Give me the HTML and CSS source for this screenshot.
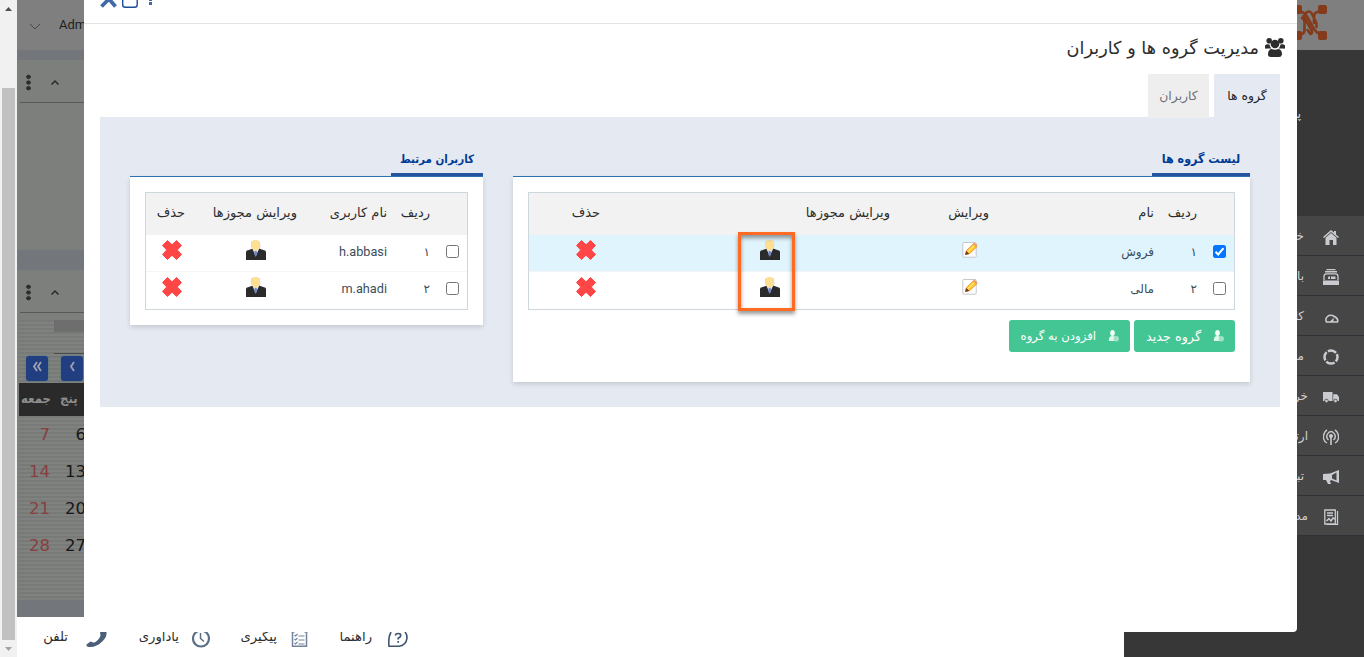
FILE: index.html
```html
<!DOCTYPE html>
<html lang="fa">
<head>
<meta charset="utf-8">
<title>مدیریت گروه ها و کاربران</title>
<link rel="stylesheet" href="styles.css">
</head>
<body>
<svg width="0" height="0" class="defs">
  <symbol id="cross" viewBox="0 0 20 20"><path d="M5.500 .5 10 4.800 14.500 .5 19.500 5.500 15.300 10 19.500 14.500 14.500 19.500 10 15.200 5.500 19.500 .5 14.500 4.700 10 .5 5.500Z" fill="#ff4646" stroke="#ff4646" stroke-linejoin="round"/></symbol>
  <symbol id="man" viewBox="0 0 20 20"><path d="M0 20v-8q0-1.500 2-1.800L7 8.500h6l5 1.700q2 .3 2 1.800v8Z" fill="#2b2b2b"/><path d="M6.500 9h6.500l-3.300 7Z" fill="#f4f5fa"/><path d="m8.800 10.500h1.700l.8 3.500-1.600 3-1.600-3Z" fill="#7085c4"/><path d="M5 1.500Q9.500-1.500 14 1.500l.5 5.500Q12 10.500 9.700 10.500T5 7Z" fill="#d7d9d7"/><path d="M5.600 1.500Q9.700-.8 13.700 1.500v5q-1 4-4 4t-4.100-4Z" fill="#ffe091"/></symbol>
  <symbol id="edit" viewBox="0 0 16 17"><rect x=".8" y="1.500" width="13.400" height="14.700" rx="1" fill="#fff" stroke="#c4c7cc"/><path d="m3.500 13.600.8-3.800L11.500 2.800l3.300 3-7.500 7Z" fill="#ffcf2d" stroke="#e8842d" stroke-width=".9"/><path d="m11 3.300 1.500-1.500 3 2.500-1.300 2Z" fill="#f09a65"/><path d="m3.200 14 1-4 3 2.800Z" fill="#713719"/><path d="m6 10.600 6-6" stroke="#fff3a0"/></symbol>
  <symbol id="usr" viewBox="0 0 12 14"><ellipse cx="4.500" cy="4" rx="2.300" ry="2.900" fill="#f4fffa"/><path d="M.8 12Q.5 7 4.500 7T8 12Z" fill="#e0f8ee"/><circle cx="8.200" cy="9.800" r="2.700" fill="#a4e2c8"/></symbol>
</svg>
<div class="desk">
  <div class="scroll">
    <svg class="arrow" viewBox="0 0 17 17"><path d="M5 11h7L8.500 7Z" fill="#505050"/></svg>
    <div class="thumb"></div>
    <svg class="arrow" viewBox="0 0 17 17"><path d="M5 7h7l-3.500 4Z" fill="#a3a3a3"/></svg>
  </div>
  <div class="work">
    <div class="top"><svg width="12" height="8" viewBox="0 0 12 8"><path d="m1 1 5 5 5-5" fill="none" stroke="#44484c"/></svg><span>Admin</span></div>
    <div class="card one"><div class="cardhead"><i class="dots"></i><svg width="10" height="7" viewBox="0 0 10 7"><path d="m1.500 5.500 3.500-3.500 3.500 3.500" fill="none" stroke="#292929" stroke-width="1.500"/></svg></div></div>
    <div class="card two"><div class="cardhead"><i class="dots"></i><svg width="10" height="7" viewBox="0 0 10 7"><path d="m1.500 5.500 3.500-3.500 3.500 3.500" fill="none" stroke="#292929" stroke-width="1.500"/></svg></div>
      <div class="cal">
        <div class="month"></div>
        <div class="nav"><b><svg width="10" height="11" viewBox="0 0 10 11"><path d="M5 1 2 5.500 5 10M9 1 6 5.500 9 10" fill="none" stroke="#9fa3ad" stroke-width="1.800"/></svg></b><b><svg width="8" height="11" viewBox="0 0 8 11"><path d="m6 1-3 4.500 3 4.500" fill="none" stroke="#9fa3ad" stroke-width="1.800"/></svg></b></div>
        <div class="days"><span>جمعه</span><span>پنج</span></div>
        <div class="nums"><i>7</i><span>6</span><i>14</i><span>13</span><i>21</i><span>20</span><i>28</i><span>27</span></div>
      </div>
    </div>
    <div class="foot">
      <span class="w1">تلفن</span>
      <svg width="22" height="16" viewBox="0 0 22 16"><path d="M14 0h6.500q.8 4.500-4 9.300Q10.500 15.500 3 15 0 14.500.5 12.500L4.500 9.500l3.500 1.300q4.800-2.300 6.500-7Z" fill="#4b5f79"/></svg>
      <span class="w2">یاداوری</span>
      <svg width="20" height="16" viewBox="0 0 20 16"><circle cx="9" cy="6.500" r="8" fill="none" stroke="#5b6e87" stroke-width="2.200"/><path d="M8.500 1v5.500L12 9.500" fill="none" stroke="#5b6e87" stroke-width="1.500"/></svg>
      <span class="w3">پیگیری</span>
      <svg width="18" height="16" viewBox="0 0 18 16"><path d="M1.500 0v14.200h14V0M.5 0h3m10 0h3" fill="none" stroke="#72839a" stroke-width="1.500"/><path d="m3.500 3 1 1 2-2m1 2h6M3.500 7l1 1 2-2m1 2h6M3.500 11l1 1 2-2m1 2h6" fill="none" stroke="#72839a" stroke-width="1.200"/></svg>
      <span class="w4">راهنما</span>
      <svg width="20" height="16" viewBox="0 0 20 16"><path d="M3 0Q0 5 1 14.200h10q7-.5 8-8Q19 2 17 0" fill="none" stroke="#3f546f" stroke-width="1.600"/><path d="M7.500 3.500q0-2 2.700-2t2.500 2q0 1.500-2.500 2.700v1.300m0 1.500v1.800" fill="none" stroke="#3f546f" stroke-width="1.700"/></svg>
    </div>
  </div>
  <div class="side">
    <div class="brand"><svg width="34" height="36" viewBox="0 0 34 36"><g fill="none" stroke="#843b1b" stroke-width="2.600" stroke-linecap="round"><path d="M4 5l6 2.500q2.500 1 4 4l7 12.500q2 3 5 4.500l4 2M4 31l5-2q2.500-1 2.500-4V17q0-3-2.500-4M30 5l-6 2q-3 1-3 5v6M13 8q3-3 5.500 0l3.500 7q2 3 1.500 7M10.500 11l8 14q1.500 3.500-1 4l-3-4"/></g><g fill="#843b1b"><rect width="9" height="9" rx="2"/><rect x="25" width="9" height="9" rx="2"/><rect y="26" width="9" height="9" rx="2"/><rect x="25" y="26" width="9" height="9" rx="2"/></g></svg></div>
    <div class="who">پنل</div>
    <div class="menu" dir="rtl">
      <div><svg viewBox="0 0 16 16"><path d="m0 8 8-7 3 2.600V2h2v3.400L16 8l-1 1-7-6-7 6ZM2.500 8.800 8 4l5.500 4.800V16H10v-5H6.500v5h-4Z"/></svg><span class="a">خانه</span></div>
      <div><svg viewBox="0 0 16 16"><path d="M3.500 0h9v1.200h-9ZM2 2h12v1.500H2Z"/><path d="M1 11V7.500Q1 4.800 3.500 4.800h9Q15 4.800 15 7.500V11" fill="none" stroke="#c9cbd0" stroke-width="1.300"/><path d="M0 11.500h16V16H0ZM5 8l2-1v3H5Zm3-.5h4.500v2.500H8Z"/></svg><span class="b">بازاریابی</span></div>
      <div><svg viewBox="0 0 16 16"><path d="M3.500 13Q1.800 10 4.500 7.500T11.500 7.500t3 5.500Z" fill="none" stroke="#c9cbd0" stroke-width="1.600"/><path d="m7 12.500 4-4-.8 4.500H7Z"/></svg><span class="c">کارتابل</span></div>
      <div><svg viewBox="0 0 16 16"><circle cx="8" cy="8" r="6.500" fill="none" stroke="#c9cbd0" stroke-width="2.500" stroke-dasharray="8.800 1.400" stroke-dashoffset="4"/></svg><span class="d">مشتریان</span></div>
      <div><svg viewBox="0 0 16 16"><path d="M0 3h9.500v9H0Zm10.200 2.200H14L16 8v4h-5.800Z"/><circle cx="3.500" cy="12" r="1.800" stroke="#464646" stroke-width=".8"/><circle cx="12.500" cy="12" r="1.800" stroke="#464646" stroke-width=".8"/></svg><span class="e">خرید</span></div>
      <div><svg viewBox="0 0 16 16"><path d="M4 14Q-1 11 1 5 2 2 4 1m8 13q5-3 3-9-1-3-3-4M5.500 11Q2.500 8.500 4.500 5q1.500-2.500 3.500-2.500T11.500 5q2 3.500-1 6" fill="none" stroke="#c9cbd0" stroke-width="1.400"/><circle cx="8" cy="7" r="2"/><path d="M7.200 8h1.600v8H7.200Z"/></svg><span class="f">ارتباطات</span></div>
      <div><svg viewBox="0 0 16 16"><path d="m0 5 7-.5L16 1v13l-8-3-1 1 1 3H5L3 11H0Zm9 1v3.500l4.500 2v-8Z" fill-rule="evenodd"/></svg><span class="g">تبلیغات</span></div>
      <div><svg viewBox="0 0 16 16"><path d="M1.800 1h10.500v14H1.800ZM14.500 2v13.500H4M4 4h6M4 6.500h6" fill="none" stroke="#c9cbd0" stroke-width="1.300"/><path d="m3.500 12 2.500-2.500 2 2.500L10 9l2 1" fill="none" stroke="#c9cbd0" stroke-width="1.500"/></svg><span class="h">مدیریت</span></div>
    </div>
  </div>
</div>

<div class="modal" dir="rtl">
  <div class="bar" dir="ltr"><svg width="56" height="10" viewBox="0 0 56 10"><path d="m1.500 6.500 7.500-7.500 6.500 7.500" fill="none" stroke="#4169a9" stroke-width="3.800"/><rect x="22.700" y="-8" width="14.500" height="15.200" rx="2.500" fill="none" stroke="#1d4d98" stroke-width="1.400"/><path d="M49 0h3v1h-3Zm0 2h3v3h-3Z" fill="#4169a9"/></svg></div>
  <div class="title"><svg width="20" height="20" viewBox="0 0 20 20"><g fill="#2d2d2d"><circle cx="4.200" cy="2.800" r="2.800"/><circle cx="15.800" cy="2.800" r="2.800"/><circle cx="10" cy="6" r="4.300"/><path d="M0 10V7.500q1.500-2 4.500-1 .5 3 2 4H2Q0 11 0 10Zm20 0V7.500q-1.500-2-4.500-1-.5 3-2 4H18q2 .5 2-.5ZM3 16.500q0-5 3.500-5.500 3.500 1.500 7 0 3.500.5 3.500 5.500-.5 2.500-3 2.500H6q-3 0-3-2.500Z"/></g></svg><h1>مدیریت گروه ها و کاربران</h1></div>
  <div class="tabs"><div class="tab on">گروه ها</div><div class="tab off">کاربران</div></div>
  <div class="panel">
    <section class="groups">
      <div class="sechead"><h2>لیست گروه ها</h2></div>
      <div class="box">
        <div class="table">
          <div class="row head"><span></span><span>ردیف</span><span>نام</span><span>ویرایش</span><span>ویرایش مجوزها</span><span>حذف</span></div>
          <div class="row sel"><span class="ck"><i class="check on"><svg width="13" height="13" viewBox="0 0 13 13"><path d="m2.500 6.800 2.700 2.700 5.300-6.300" fill="none" stroke="#fff" stroke-width="2"/></svg></i></span><span>۱</span><span>فروش</span><span class="ed"><svg width="16" height="17"><use href="#edit"/></svg></span><span class="pm"><svg width="20" height="20"><use href="#man"/></svg></span><span class="dl"><svg width="20" height="20"><use href="#cross"/></svg></span></div>
          <div class="row"><span class="ck"><i class="check"></i></span><span>۲</span><span>مالی</span><span class="ed"><svg width="16" height="17"><use href="#edit"/></svg></span><span class="pm"><svg width="20" height="20"><use href="#man"/></svg></span><span class="dl"><svg width="20" height="20"><use href="#cross"/></svg></span></div>
        </div>
        <div class="buttons"><div class="btn new"><svg width="12" height="14"><use href="#usr"/></svg><span>گروه جدید</span></div><div class="btn add"><svg width="12" height="14"><use href="#usr"/></svg><span>افزودن به گروه</span></div></div>
      </div>
    </section>
    <section class="users">
      <div class="sechead"><h2>کاربران مرتبط</h2></div>
      <div class="box">
        <div class="table">
          <div class="row head"><span></span><span>ردیف</span><span>نام کاربری</span><span>ویرایش مجوزها</span><span>حذف</span></div>
          <div class="row"><span class="ck"><i class="check"></i></span><span>۱</span><span class="lat">h.abbasi</span><span class="pm"><svg width="20" height="20"><use href="#man"/></svg></span><span class="dl"><svg width="20" height="20"><use href="#cross"/></svg></span></div>
          <div class="row"><span class="ck"><i class="check"></i></span><span>۲</span><span class="lat">m.ahadi</span><span class="pm"><svg width="20" height="20"><use href="#man"/></svg></span><span class="dl"><svg width="20" height="20"><use href="#cross"/></svg></span></div>
        </div>
      </div>
    </section>
  </div>
</div>
<div class="marker"></div>
</body>
</html>
```
FILE: styles.css
```css
* { box-sizing: border-box; }
body { margin: 0; width: 1364px; height: 657px; overflow: hidden; position: relative; background: #fff; font: 12px "DejaVu Sans", sans-serif; color: #2d2d2d; }
svg { display: block; flex: none; }
.defs { position: absolute; }
h1, h2 { margin: 0; }
i { font-style: normal; }
.desk { display: flex; height: 657px; }

.scroll { width: 17px; background: #f1f1f1; display: flex; flex-direction: column; }
.arrow { width: 17px; height: 17px; }
.thumb { margin: 71px 2px 0; height: 552px; background: #c1c1c1; }

.work { width: 1107px; background: #73777c; display: flex; flex-direction: column; }
.top { height: 50px; background: #7f7f7f; display: flex; align-items: center; gap: 18px; padding-left: 12px; font: 13px Roboto, sans-serif; color: #1e1e1e; }
.top svg { margin-top: 3px; }
.top span { margin-top: -2px; }
.card { background: #7d7f7d; }
.card.one { margin-top: 10px; height: 190px; }
.card.two { margin-top: 20px; height: 330px; }
.cardhead { height: 43px; margin-left: 3px; border-bottom: 1px solid #575959; display: flex; align-items: center; padding: 2px 0 0 6px; }
.dots { width: 5px; height: 17px; margin-right: 19px; background: radial-gradient(circle at center, #2d2d2d 2px, transparent 2.500px) 0 0 / 5px 5.700px; }
.cal { margin: 7px 0 0 2px; height: 279px; background: repeating-linear-gradient(#787a78 0 2px, #808280 2px 4px); }
.month { height: 34px; margin-left: 35px; border-bottom: 1px solid #4c4c4c; background: linear-gradient(#6e6e6e 0 12px, transparent 12px); }
.nav { display: flex; gap: 13px; padding: 2px 0 0 7px; height: 29px; }
.nav b { width: 22px; height: 25px; border-radius: 3px; background: #213e80; display: flex; justify-content: center; padding-top: 5px; box-shadow: 0 0 2px #377b8c; }
.days { height: 33px; background: #2a2a2a; display: flex; color: #8d8d8d; font-weight: bold; font-family: "DejaVu Sans Condensed", sans-serif; font-size: 13px; line-height: 32px; }
.days span:first-child { width: 41px; padding-left: 2px; }
.nums { display: grid; grid-template-columns: 31px 36px; grid-auto-rows: 37px; text-align: right; font: 16.500px "DejaVu Sans", sans-serif; line-height: 37px; color: #171717; }
.nums i { color: #873f3f; }
.foot { margin-top: auto; height: 40px; background: #fff; display: flex; align-items: flex-start; padding: 15px 0 0 25px; }
.foot span { line-height: 14px; margin-top: -2px; display: flex; justify-content: flex-end; direction: ltr; white-space: nowrap; font-size: 13.200px; }
.foot .w1 { width: 26px; margin-right: 18px; }
.foot .w2 { width: 44px; margin-right: 13px; margin-left: 27px; }
.foot .w3 { width: 40px; margin-right: 14px; margin-left: 25px; }
.foot .w4 { width: 35px; margin-right: 16px; margin-left: 28px; }

.side { width: 240px; background: #373737; color: #d2d2d2; }
.brand { height: 50px; background: #7f7f7f; display: flex; padding: 5px 0 0 169px; }
.who { height: 166px; padding: 56px 63px 0 0; text-align: left; direction: rtl; text-align: right; font-size: 13px; }
.menu div { height: 40px; background: #464646; border-bottom: 1px solid #303036; display: flex; align-items: center; padding-right: 25px; }
.menu svg { width: 16px; height: 16px; margin-top: 2px; fill: #c9cbd0; }
.menu span { padding-right: 19px; font-size: 12px; line-height: 16px; }
.menu .e, .menu .h, .menu .f { padding-right: 15px; }

.modal { position: absolute; left: 84px; top: 0; width: 1213px; height: 632px; background: #fff; border-bottom-right-radius: 4px; }
.bar { height: 24px; border-bottom: 1px solid #e3e3e3; padding-left: 16px; }
.title { display: flex; height: 50px; padding: 14px 12px 0 0; gap: 6px; }
.title h1 { font: 17.700px "DejaVu Sans", sans-serif; line-height: 20px; white-space: nowrap; }
.tabs { display: flex; height: 43px; gap: 5px; padding-right: 17px; }
.tab { line-height: 43px; text-align: center; white-space: nowrap; font-size: 12.400px; }
.tab.on { width: 66px; background: #e5eaf2; color: #222; }
.tab.off { width: 61px; height: 44px; background: #eee; color: #717171; z-index: 1; }
.panel { margin: 0 17px 0 16px; height: 290px; background: #e5eaf2; padding: 30px 30px 0; display: flex; justify-content: space-between; align-items: flex-start; }
.groups { width: 737px; }
.users { width: 353px; }
.sechead { height: 30px; border-bottom: 1px solid #2e75b6; }
.sechead h2 { width: 98px; height: 29px; border-bottom: 3px solid #25569f; text-align: center; font-family: "DejaVu Sans Condensed", sans-serif; font-size: 12.400px; line-height: 24px; color: #003b94; white-space: nowrap; }
.users .sechead h2 { width: 92px; font-size: 11.500px; }
.box { background: #fff; padding: 15px; box-shadow: 0 2px 5px rgba(0,0,0,.15); }
.groups .box { height: 205px; }
.users .box { height: 148px; }
.table { height: 118px; border: 1px solid #ced7db; }
.row { display: grid; height: 37px; border-bottom: 1px solid #f3f5f6; color: #3b4d59; white-space: nowrap; line-height: 34px; }
.row:last-child { border-bottom: 0; }
.groups .row { grid-template-columns: 37px 43px 165px 99px 290px 71px; }
.users .row { grid-template-columns: 37px 43px 90px 112px 39px; }
.row.head { height: 42px; background: #f2f2f2; border: 0; color: #2d2d2d; line-height: 40px; font-size: 13px; }
.row.sel { background: #e0f4fd; }
.lat { direction: ltr; text-align: right; font: 12.700px Roboto, sans-serif; line-height: 34px; }
.ck { padding: 10px 8px 0 0; }
.check { display: block; width: 13px; height: 13px; border: 1px solid #767676; border-radius: 2.500px; background: #fff; }
.check.on { border: 0; background: #0075ff; }
.ed { padding: 6px 11px 0 0; }
.pm { padding: 5px 110px 0 0; }
.dl { padding: 5px 4px 0 0; }
.users .pm { padding-right: 31px; }
.users .dl { padding-right: 3px; }
.buttons { display: flex; gap: 4px; margin-top: 10px; }
.btn { height: 32px; border-radius: 3px; background: #44c694; color: #fff; display: flex; align-items: center; padding-right: 10px; gap: 12px; white-space: nowrap; }
.new { width: 101px; font-size: 12.800px; }
.add { width: 121px; font-size: 11.700px; }

.marker { position: absolute; left: 738px; top: 232px; width: 57px; height: 79px; border: 3px solid #ff6b22; box-shadow: 0 3px 4px rgba(0,0,0,.4), inset 0 3px 4px rgba(0,0,0,.4); }
```
